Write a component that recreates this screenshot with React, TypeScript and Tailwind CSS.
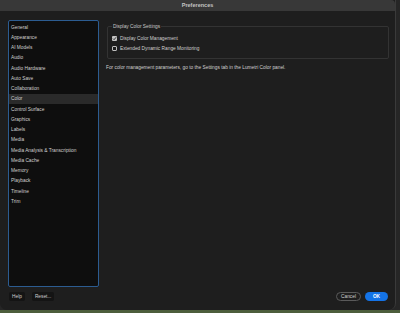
import React from "react";

const sections = [
  "General",
  "Appearance",
  "AI Models",
  "Audio",
  "Audio Hardware",
  "Auto Save",
  "Collaboration",
  "Color",
  "Control Surface",
  "Graphics",
  "Labels",
  "Media",
  "Media Analysis & Transcription",
  "Media Cache",
  "Memory",
  "Playback",
  "Timeline",
  "Trim",
];

const font = { fontFamily: '"Liberation Sans", Arial, sans-serif' };

const Check = ({ checked }: { checked?: boolean }) =>
  checked ? (
    <span className="w-[5px] h-[5px] rounded-[1px] bg-[#c4c4c4] flex items-center justify-center">
      <svg viewBox="0 0 6 6" width="5" height="5">
        <path d="M1.2 3.1 L2.5 4.4 L4.9 1.5" stroke="#1a1a1a" strokeWidth="1" fill="none" />
      </svg>
    </span>
  ) : (
    <span className="w-[5px] h-[5px] rounded-[1px] border border-[#bdbdbd] bg-[#1e1e1e]" />
  );

export default function App() {
  const selected = "Color";
  return (
    <div className="w-[400px] h-[313px] flex flex-col bg-[#262626] overflow-hidden" style={font}>
      <div className="flex h-[310px]">
        <div className="w-[396px] h-full flex flex-col bg-[#1e1e1e] rounded-b-[7px] border-r border-[#3a3a3a]">
          <div className="h-[11px] bg-[#383838] flex items-center justify-center text-[5.5px] font-bold text-[#c4c4c4] rounded-tr-[4px]">
            Preferences
          </div>
          <div className="flex flex-1">
            <div className="flex flex-col pl-[8px] pt-[9px]">
              <div className="w-[91px] h-[267px] border border-[#2c5c91] bg-[#0e0e0e] rounded-[2px] pt-[1px]">
                {sections.map((s) => (
                  <div
                    key={s}
                    className={`h-[10.25px] flex items-center pl-[2px] text-[4.8px] text-[#d0d0d0] ${
                      s === selected ? "bg-[#2a2a2a]" : ""
                    }`}
                  >
                    {s}
                  </div>
                ))}
              </div>
              <div className="flex gap-[7px] mt-[5px] pl-[1px]">
                <button className="h-[9px] px-[3px] rounded-[2px] bg-[#141414] text-[4.8px] text-[#cfcfcf] flex items-center">
                  Help
                </button>
                <button className="h-[9px] px-[3px] rounded-[2px] bg-[#141414] text-[4.8px] text-[#cfcfcf] flex items-center">
                  Reset...
                </button>
              </div>
            </div>
            <div className="flex-1 flex flex-col pl-[8px] pr-[6px] pt-[12px]">
              <fieldset className="border border-[#333333] rounded-[2px] h-[36px] pl-[4px] pt-[3px]">
                <legend className="text-[4.8px] text-[#c8c8c8] px-[1px]">Display Color Settings</legend>
                <div className="flex items-center gap-[3px] h-[10px] text-[4.8px] text-[#d0d0d0]">
                  <Check checked />
                  Display Color Management
                </div>
                <div className="flex items-center gap-[3px] h-[10px] text-[4.8px] text-[#d0d0d0]">
                  <Check />
                  Extended Dynamic Range Monitoring
                </div>
              </fieldset>
              <p className="mt-[5px] text-[4.8px] text-[#d0d0d0] -ml-[1px]">
                For color management parameters, go to the Settings tab in the Lumetri Color panel.
              </p>
              <div className="flex-1" />
              <div className="flex justify-end gap-[4px] mb-[9px] pr-[1px]">
                <button className="h-[9px] w-[25px] rounded-full border border-[#5a5a5a] text-[4.8px] text-[#cfcfcf] flex items-center justify-center">
                  Cancel
                </button>
                <button className="h-[9px] w-[23px] rounded-full bg-[#1473e6] text-[4.8px] font-bold text-white flex items-center justify-center">
                  OK
                </button>
              </div>
            </div>
          </div>
        </div>
      </div>
      <div className="flex-1 bg-[#4d5e3c]" />
    </div>
  );
}
